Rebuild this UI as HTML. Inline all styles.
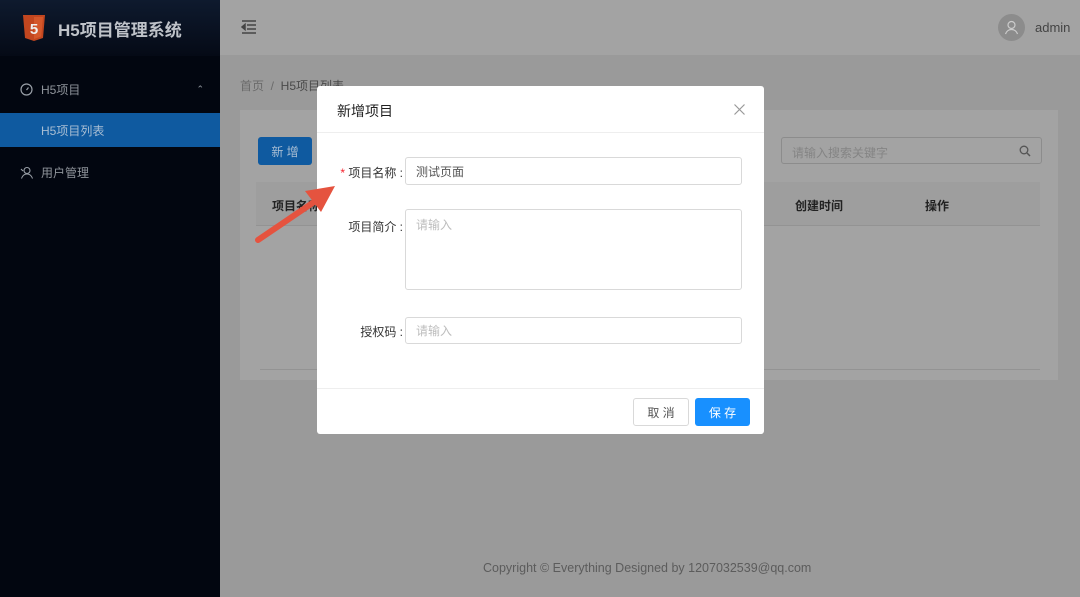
<!DOCTYPE html>
<html><head><meta charset="utf-8"><style>
*{box-sizing:border-box;margin:0;padding:0}
body{width:1080px;height:597px;overflow:hidden;font-family:"Liberation Sans","Noto Sans CJK SC",sans-serif;background:#9a9a9a;position:relative}
.side{position:absolute;left:0;top:0;width:220px;height:597px;background:#020610}
.logo{height:56px;background:linear-gradient(#0e1a2e,#050a16);display:flex;align-items:center;padding-left:22px;color:#bfc3c9;font-size:17px;font-weight:bold}
.mi{position:absolute;left:0;width:220px;height:34px;display:flex;align-items:center;color:#8f949b;font-size:12px}
.hdr{position:absolute;left:220px;top:0;width:860px;height:55px;background:#a3a3a3}
.card{position:absolute;left:240px;top:110px;width:818px;height:270px;background:#a3a3a3}
.modal{position:absolute;left:317px;top:86px;width:447px;height:348px;background:#fff;border-radius:3px}
.lbl{position:absolute;font-size:12px;color:#333;text-align:right}
.inp{position:absolute;left:88px;width:337px;border:1px solid #d9d9d9;border-radius:3px;font-size:12px;color:#555;padding:0 10px;display:flex;align-items:center}
.ph{color:#bdbdbd}
</style></head><body>
<div class="side">
 <div class="logo"><svg width="24" height="26" viewBox="0 0 24 26"><path d="M1 0h22l-2 23-9 3-9-3z" fill="#c2461f"/><path d="M12 2h9l-1.8 19.5L12 24z" fill="#d4572a"/><text x="12" y="19" fill="#eee" font-size="15" font-weight="bold" text-anchor="middle" font-family="Liberation Sans">5</text></svg><span style="margin-left:12px">H5项目管理系统</span></div>
 <div class="mi" style="top:72px;padding-left:20px"><svg width="13" height="13" viewBox="0 0 13 13"><circle cx="6.5" cy="6.5" r="5.5" fill="none" stroke="#9aa0a8" stroke-width="1.2"/><path d="M6.5 7l2-2.5" stroke="#9aa0a8" stroke-width="1.2"/></svg><span style="margin-left:8px">H5项目</span><span style="position:absolute;right:16px;font-size:9px">⌃</span></div>
 <div class="mi" style="top:113px;background:#0f5aa0;padding-left:41px;color:#a9bed3">H5项目列表</div>
 <div class="mi" style="top:155px;padding-left:20px"><svg width="13" height="13" viewBox="0 0 13 13"><circle cx="7" cy="4.5" r="3" fill="none" stroke="#9aa0a8" stroke-width="1.1"/><path d="M1.5 12.5c1-3 3-4.5 5.5-4.5s4.5 1.5 5.5 4.5M1 3l2 2" fill="none" stroke="#9aa0a8" stroke-width="1.1"/></svg><span style="margin-left:8px">用户管理</span></div>
</div>
<div class="hdr">
 <svg style="position:absolute;left:21px;top:20px" width="16" height="14" viewBox="0 0 16 14"><path d="M1 1h14M6 5h9M6 9h9M1 13h14M4 4.5L1 7l3 2.5z" stroke="#444" stroke-width="1.5" fill="#444"/></svg>
 <div style="position:absolute;left:778px;top:14px;width:27px;height:27px;border-radius:50%;background:#8c8c8c"><svg width="27" height="27" viewBox="0 0 27 27"><circle cx="13.5" cy="11" r="3.5" fill="none" stroke="#ccc" stroke-width="1.2"/><path d="M7.5 20c1-3 3.5-4.5 6-4.5s5 1.5 6 4.5" fill="none" stroke="#ccc" stroke-width="1.2"/></svg></div>
 <div style="position:absolute;left:815px;top:20px;font-size:13px;color:#444">admin</div>
</div>
<div style="position:absolute;left:240px;top:77px;font-size:12px;color:#6a6a6a">首页 &nbsp;/ &nbsp;<span style="color:#4a4a4a">H5项目列表</span></div>
<div class="card">
 <div style="position:absolute;left:18px;top:27px;width:54px;height:28px;background:#0f5aa0;border-radius:3px;color:#a9bed3;font-size:12px;display:flex;align-items:center;justify-content:center">新 增</div>
 <div style="position:absolute;left:541px;top:27px;width:261px;height:27px;border:1px solid #8c8c8c;border-radius:3px;font-size:12px;color:#848484;padding:6px 10px">请输入搜索关键字<svg style="position:absolute;right:10px;top:7px" width="12" height="12" viewBox="0 0 12 12"><circle cx="5" cy="5" r="3.8" fill="none" stroke="#555" stroke-width="1.3"/><path d="M8 8l3 3" stroke="#555" stroke-width="1.5"/></svg></div>
 <div style="position:absolute;left:16px;top:72px;width:784px;height:44px;background:#9e9e9e;border-bottom:1px solid #939393;font-size:12px;font-weight:bold;color:#222">
  <span style="position:absolute;left:16px;top:15px">项目名称</span><span style="position:absolute;left:539px;top:15px">创建时间</span><span style="position:absolute;left:669px;top:15px">操作</span></div>
 <div style="position:absolute;left:20px;top:259px;width:780px;height:1px;background:#939393"></div>
</div>
<div style="position:absolute;left:483px;top:561px;font-size:12.5px;color:#5c5c5c;white-space:nowrap">Copyright © Everything Designed by 1207032539@qq.com</div>
<div class="modal">
 <div style="height:47px;border-bottom:1px solid #eee;padding:15px 20px;font-size:14px;color:#222;position:relative">新增项目<svg style="position:absolute;right:19px;top:18px" width="11" height="11" viewBox="0 0 11 11"><path d="M0.5 0.5l10 10M10.5 0.5l-10 10" stroke="#999" stroke-width="1.2"/></svg></div>
 <div class="lbl" style="left:10px;top:78px;width:76px"><span style="color:#f5222d">*</span> 项目名称 :</div>
 <div class="inp" style="top:71px;height:28px">测试页面</div>
 <div class="lbl" style="left:10px;top:132px;width:76px">项目简介 :</div>
 <div class="inp ph" style="top:123px;height:81px;align-items:flex-start;padding-top:6px">请输入</div>
 <div class="lbl" style="left:10px;top:237px;width:76px">授权码 :</div>
 <div class="inp ph" style="top:231px;height:27px">请输入</div>
 <div style="position:absolute;left:0;top:302px;width:447px;height:1px;background:#eee"></div>
 <div style="position:absolute;left:316px;top:312px;width:56px;height:28px;border:1px solid #d9d9d9;border-radius:3px;font-size:12px;color:#555;display:flex;align-items:center;justify-content:center">取 消</div>
 <div style="position:absolute;left:378px;top:312px;width:55px;height:28px;background:#1890ff;border-radius:3px;font-size:12px;color:#fff;display:flex;align-items:center;justify-content:center">保 存</div>
</div>
<svg style="position:absolute;left:250px;top:180px" width="90" height="70" viewBox="0 0 90 70"><path d="M8 60L64 22" stroke="#e5533f" stroke-width="6" stroke-linecap="round"/><path d="M85 6L55 11L71 32z" fill="#e5533f"/></svg>
</body></html>
